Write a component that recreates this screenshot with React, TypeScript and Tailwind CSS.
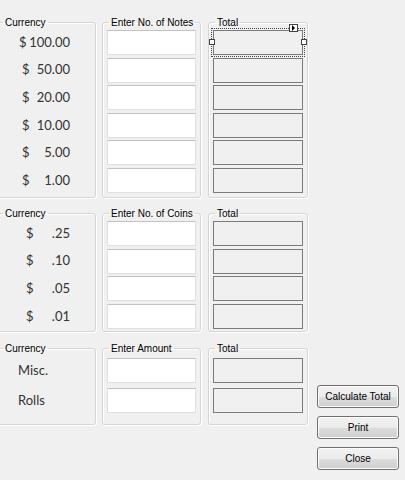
import React from 'react';

interface Row {
  sign: number;
  amount: string;
}

const notes: Row[] = [
  { sign: 22, amount: '100.00' },
  { sign: 25, amount: '50.00' },
  { sign: 25, amount: '20.00' },
  { sign: 25, amount: '10.00' },
  { sign: 25, amount: '5.00' },
  { sign: 25, amount: '1.00' },
];

const coins: Row[] = [
  { sign: 29, amount: '.25' },
  { sign: 29, amount: '.10' },
  { sign: 29, amount: '.05' },
  { sign: 29, amount: '.01' },
];

function GroupBox({
  label,
  className,
  children,
}: {
  label: string;
  className: string;
  children: React.ReactNode;
}) {
  return (
    <fieldset
      className={`border border-[#d5d5d5] rounded-[3px] shadow-[inset_1px_1px_0_#ffffff,1px_1px_0_#ffffff] ${className}`}
    >
      <legend className="ml-[6px] px-[2px] text-[10px] leading-[13px] text-black">
        {label}
      </legend>
      {children}
    </fieldset>
  );
}

function TextBox() {
  return (
    <div className="h-[25px] w-[89px] mx-auto bg-white border border-[#e0e0e0] border-t-[#c2c2c2]" />
  );
}

function TotalBox({ selected }: { selected?: boolean }) {
  return (
    <div className="relative h-[25px] w-[90px] mx-auto border border-[#7a7a7a] bg-[#f0f0f0]">
      {selected && (
        <>
          <div className="absolute -inset-[3px] border border-dotted border-[#444]" />
          <div className="absolute -left-[5px] top-[8px] w-[6px] h-[6px] bg-white border border-[#444]" />
          <div className="absolute -right-[5px] top-[8px] w-[6px] h-[6px] bg-white border border-[#444]" />
          <div className="absolute -top-[7px] right-[4px] w-[9px] h-[8px] bg-white border border-[#444] flex items-center justify-center">
            <svg width="5" height="6" viewBox="0 0 5 6">
              <polygon points="1,0 4,3 1,6" fill="#000" />
            </svg>
          </div>
        </>
      )}
    </div>
  );
}

function Amount({ row }: { row: Row }) {
  return (
    <div className="h-[25px] flex items-center font-['Lato','Open_Sans',sans-serif] text-[13px] text-[#333]">
      <span style={{ marginLeft: row.sign }}>$</span>
      <span className="ml-auto mr-[25px]">{row.amount}</span>
    </div>
  );
}

function Button({ children }: { children: React.ReactNode }) {
  return (
    <button className="h-[23px] w-[82px] rounded-[3px] border border-[#707070] bg-[linear-gradient(#f2f2f2_0%,#ebebeb_50%,#dddddd_50%,#cfcfcf_100%)] shadow-[inset_0_0_0_1px_#fcfcfc] text-[10px] text-black">
      {children}
    </button>
  );
}

export default function App() {
  return (
    <div className="min-h-screen w-full overflow-hidden bg-[#f0f0f0] pt-[16px] font-['Liberation_Sans',Arial,sans-serif]">
      {/* Notes */}
      <div className="flex items-start">
        <GroupBox label="Currency" className="-ml-[4px] w-[100px]">
          <div className="flex flex-col gap-[2.6px] pt-[1px] pb-[4px]">
            {notes.map((r) => (
              <Amount key={r.amount} row={r} />
            ))}
          </div>
        </GroupBox>
        <GroupBox label="Enter No. of Notes" className="ml-[6px] w-[99px]">
          <div className="flex flex-col gap-[2.6px] pt-[1px] pb-[4px]">
            {notes.map((r) => (
              <TextBox key={r.amount} />
            ))}
          </div>
        </GroupBox>
        <GroupBox label="Total" className="ml-[7px] w-[100px]">
          <div className="flex flex-col gap-[2.6px] pt-[1px] pb-[4px]">
            {notes.map((r, i) => (
              <TotalBox key={r.amount} selected={i === 0} />
            ))}
          </div>
        </GroupBox>
      </div>

      {/* Coins */}
      <div className="flex items-start mt-[9px]">
        <GroupBox label="Currency" className="-ml-[4px] w-[100px]">
          <div className="flex flex-col gap-[2.6px] pt-[1px] pb-[2px]">
            {coins.map((r) => (
              <Amount key={r.amount} row={r} />
            ))}
          </div>
        </GroupBox>
        <GroupBox label="Enter No. of Coins" className="ml-[6px] w-[99px]">
          <div className="flex flex-col gap-[2.6px] pt-[1px] pb-[2px]">
            {coins.map((r) => (
              <TextBox key={r.amount} />
            ))}
          </div>
        </GroupBox>
        <GroupBox label="Total" className="ml-[7px] w-[100px]">
          <div className="flex flex-col gap-[2.6px] pt-[1px] pb-[2px]">
            {coins.map((r) => (
              <TotalBox key={r.amount} />
            ))}
          </div>
        </GroupBox>
      </div>

      {/* Misc */}
      <div className="flex items-start mt-[10px]">
        <GroupBox label="Currency" className="-ml-[4px] w-[100px]">
          <div className="flex flex-col gap-[5px] pt-[3px] pb-[11px] font-['Lato','Open_Sans',sans-serif] text-[13px] text-[#333]">
            <div className="h-[25px] flex items-center pl-[21px]">Misc.</div>
            <div className="h-[25px] flex items-center pl-[21px]">Rolls</div>
          </div>
        </GroupBox>
        <GroupBox label="Enter Amount" className="ml-[6px] w-[99px]">
          <div className="flex flex-col gap-[5px] pt-[3px] pb-[11px]">
            <TextBox />
            <TextBox />
          </div>
        </GroupBox>
        <GroupBox label="Total" className="ml-[7px] w-[100px]">
          <div className="flex flex-col gap-[5px] pt-[3px] pb-[11px]">
            <TotalBox />
            <TotalBox />
          </div>
        </GroupBox>
        <div className="ml-[9px] mt-[43px] flex flex-col gap-[8px]">
          <Button>Calculate Total</Button>
          <Button>Print</Button>
          <Button>Close</Button>
        </div>
      </div>
    </div>
  );
}
